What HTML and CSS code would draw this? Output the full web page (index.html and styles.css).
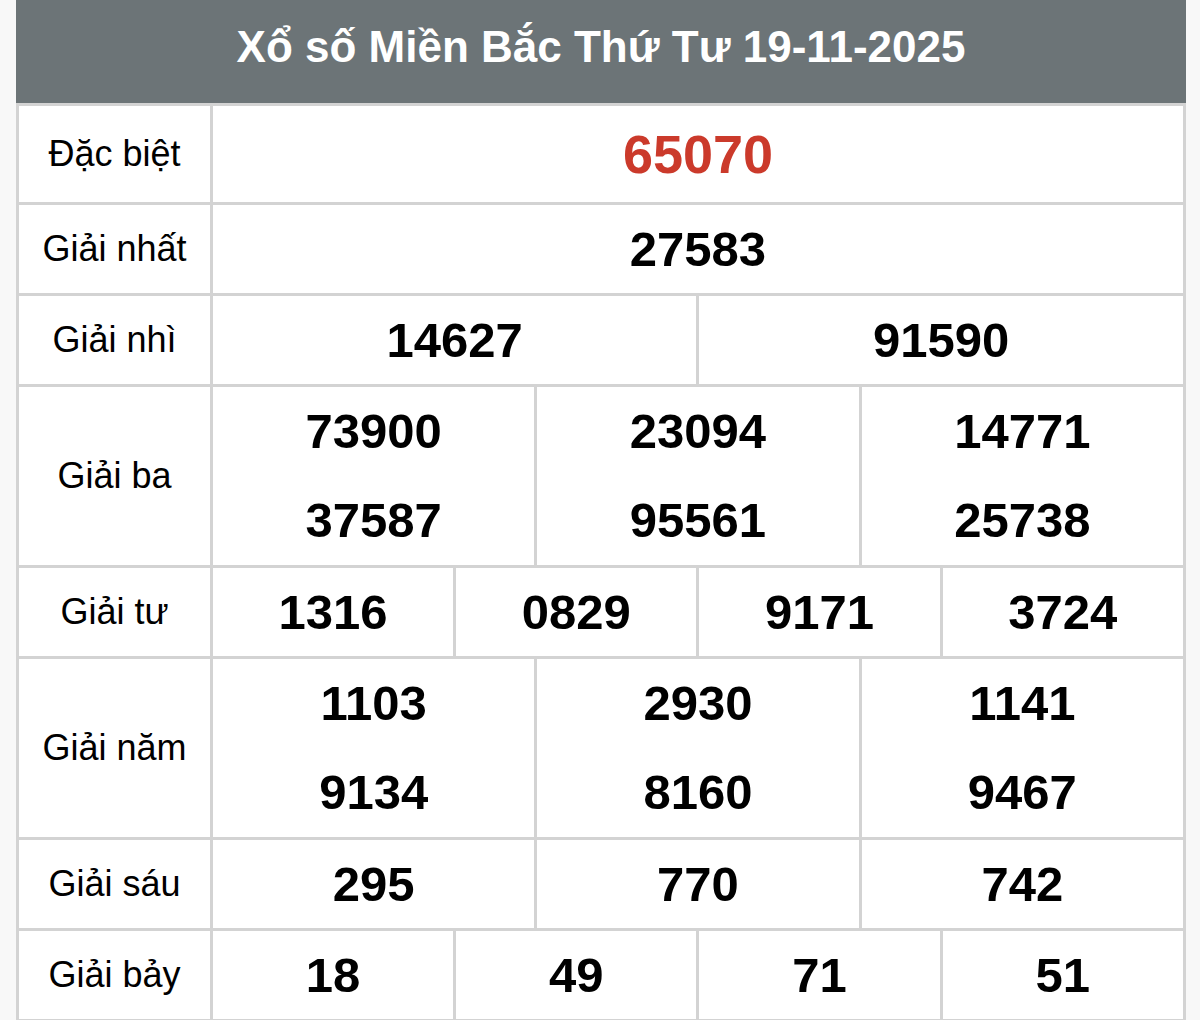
FILE: index.html
```html
<!DOCTYPE html>
<html lang="vi">
<head>
<meta charset="utf-8">
<title>Xổ số Miền Bắc</title>
<link rel="stylesheet" href="styles.css">
</head>
<body>
<table class="kq">
  <colgroup>
    <col class="c-label">
    <col><col><col><col><col><col><col><col><col><col><col><col>
  </colgroup>
  <thead>
    <tr><th colspan="13" class="title"><div class="title-inner">Xổ số Miền Bắc Thứ Tư 19-11-2025</div></th></tr>
  </thead>
  <tbody>
    <tr class="r-db">
      <td class="label">Đặc biệt</td>
      <td colspan="12" class="num special">65070</td>
    </tr>
    <tr>
      <td class="label">Giải nhất</td>
      <td colspan="12" class="num">27583</td>
    </tr>
    <tr>
      <td class="label">Giải nhì</td>
      <td colspan="6" class="num">14627</td>
      <td colspan="6" class="num">91590</td>
    </tr>
    <tr>
      <td class="label">Giải ba</td>
      <td colspan="4" class="num"><div class="line">73900</div><div class="line">37587</div></td>
      <td colspan="4" class="num"><div class="line">23094</div><div class="line">95561</div></td>
      <td colspan="4" class="num"><div class="line">14771</div><div class="line">25738</div></td>
    </tr>
    <tr>
      <td class="label">Giải tư</td>
      <td colspan="3" class="num">1316</td>
      <td colspan="3" class="num">0829</td>
      <td colspan="3" class="num">9171</td>
      <td colspan="3" class="num">3724</td>
    </tr>
    <tr>
      <td class="label">Giải năm</td>
      <td colspan="4" class="num"><div class="line">1103</div><div class="line">9134</div></td>
      <td colspan="4" class="num"><div class="line">2930</div><div class="line">8160</div></td>
      <td colspan="4" class="num"><div class="line">1141</div><div class="line">9467</div></td>
    </tr>
    <tr>
      <td class="label">Giải sáu</td>
      <td colspan="4" class="num">295</td>
      <td colspan="4" class="num">770</td>
      <td colspan="4" class="num">742</td>
    </tr>
    <tr>
      <td class="label">Giải bảy</td>
      <td colspan="3" class="num">18</td>
      <td colspan="3" class="num">49</td>
      <td colspan="3" class="num">71</td>
      <td colspan="3" class="num">51</td>
    </tr>
  </tbody>
</table>
</body>
</html>
```
FILE: styles.css
```css
html, body {
  margin: 0;
  padding: 0;
  background: #f8f8f8;
  font-family: "Liberation Sans", Arial, sans-serif;
}

.kq {
  margin-left: 16px;
  width: 1170px;
  border-collapse: collapse;
  table-layout: fixed;
  background: #ffffff;
  color: #000;
}

.c-label {
  width: 194px;
}

.kq td {
  border: 3px solid #d3d3d3;
  padding: 0;
  text-align: center;
  vertical-align: middle;
}

.title {
  background: #6c7477;
  color: #ffffff;
  font-weight: bold;
  font-size: 44px;
  padding: 0;
  border: 3px solid #6c7477;
  border-bottom: 3px solid #d3d3d3;
  text-align: center;
}

.title-inner {
  height: 100px;
  line-height: 88px;
}

.label {
  font-size: 36px;
  height: 88px;
}

.num {
  font-weight: bold;
  font-size: 49px;
  line-height: 88px;
  height: 88px;
}

.num .line {
  line-height: 89px;
}

.r-db .label,
.r-db .num {
  height: 96px;
}

.special {
  color: #cb3a2b;
  font-size: 54px;
}
```
